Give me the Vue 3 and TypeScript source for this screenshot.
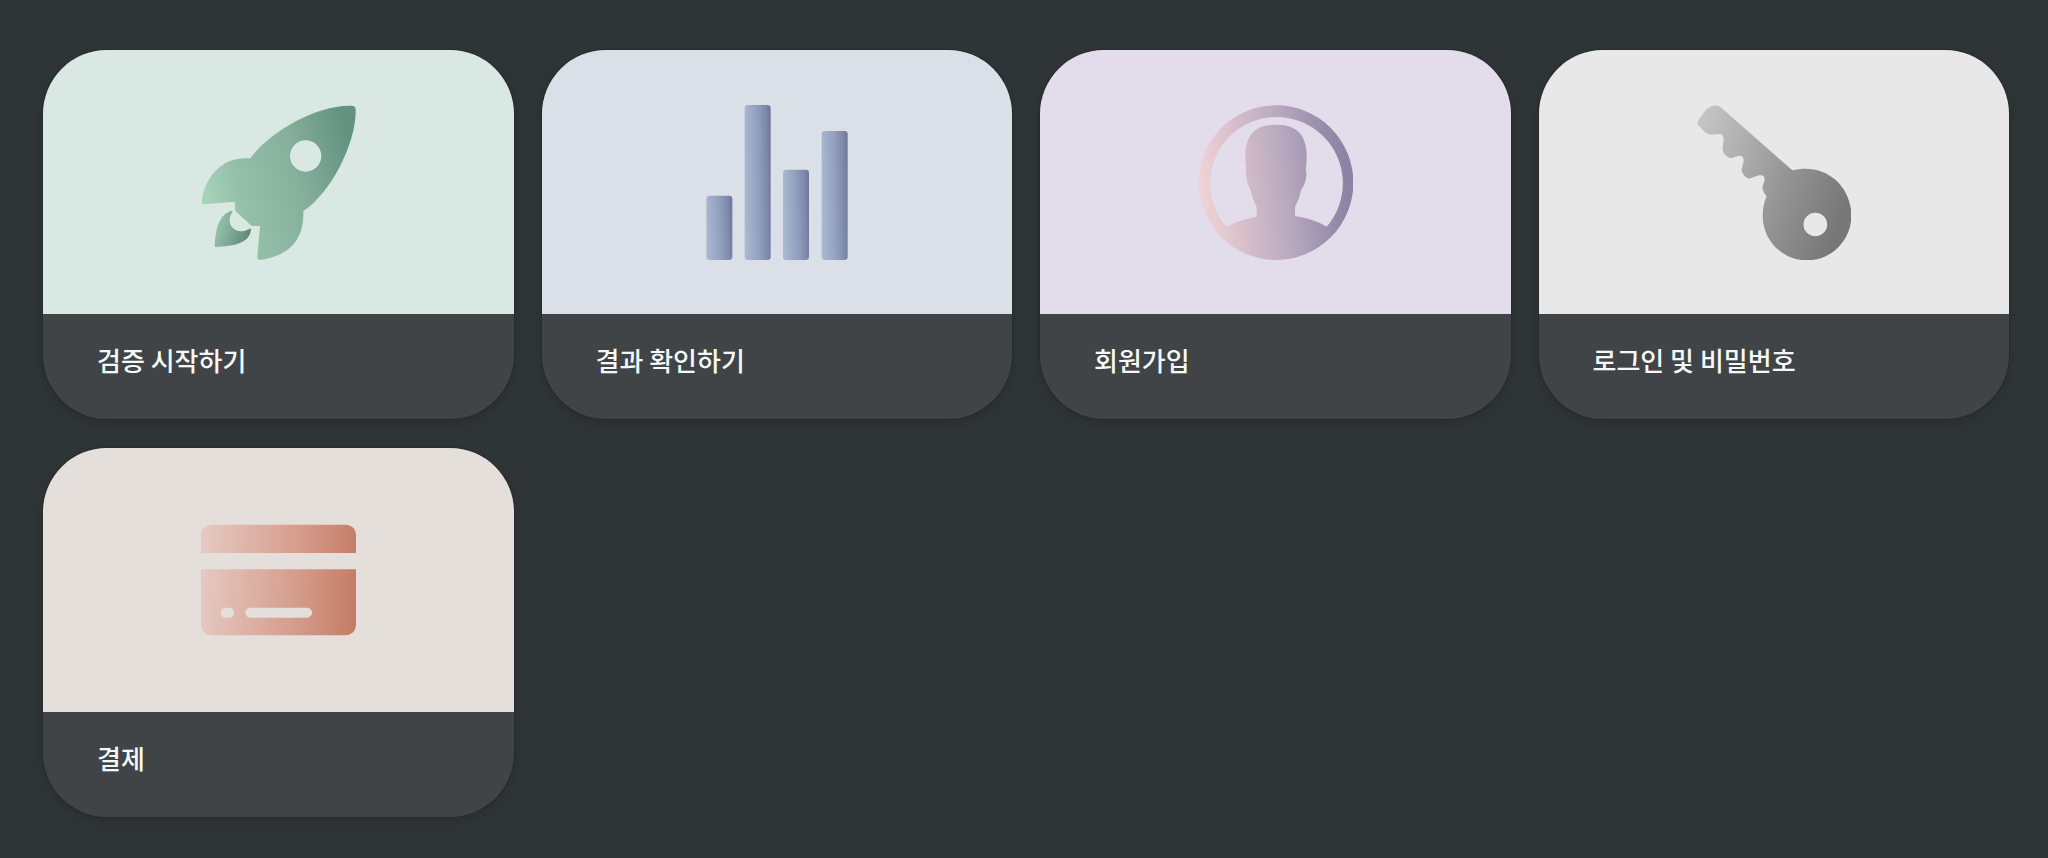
<script setup lang="ts">
type IconName = 'rocket' | 'bars' | 'person' | 'key' | 'card'

interface Topic {
  id: IconName
  title: string
}

const topics: Topic[] = [
  { id: 'rocket', title: '검증 시작하기' },
  { id: 'bars', title: '결과 확인하기' },
  { id: 'person', title: '회원가입' },
  { id: 'key', title: '로그인 및 비밀번호' },
  { id: 'card', title: '결제' },
]
</script>

<template>
  <main class="page">
    <ul class="grid">
      <li v-for="topic in topics" :key="topic.id" class="cell">
        <a class="tile" :href="`#${topic.id}`">
          <span class="cover" :class="topic.id">
            <svg v-if="topic.id === 'rocket'" class="icon" viewBox="62 73 465 465" aria-hidden="true">
              <defs>
                <linearGradient id="rocket-body" x1="0" y1="0.62" x2="1" y2="0.36">
                  <stop offset="0" stop-color="#a8d5bb" />
                  <stop offset="0.25" stop-color="#94c0aa" />
                  <stop offset="0.62" stop-color="#86b09c" />
                  <stop offset="1" stop-color="#629280" />
                </linearGradient>
                <linearGradient id="rocket-flame" x1="0" y1="0.3" x2="1" y2="0.6">
                  <stop offset="0" stop-color="#9ac8b0" />
                  <stop offset="1" stop-color="#618777" />
                </linearGradient>
              </defs>
              <path
                fill="url(#rocket-body)"
                fill-rule="evenodd"
                d="M210 233C256 165 398 72 514 75Q524 75 526 84C530 180 455 335 369 391C372 480 325 524 240 538Q230 538 231 528L239 436L214 436L165 391L163 363L71 371Q62 371 64 360C77 280 131 226 210 233ZM376 179A47 47 0 1 0 376 273A47 47 0 1 0 376 179Z"
              />
              <path
                fill="url(#rocket-flame)"
                d="M154 390Q158 391 156 395C137 421 154 451 181 452Q193 452 208 444Q212 443 212 448C207 486 163 497 106 499Q102 499 103 494C106 441 118 399 154 390Z"
              />
            </svg>

            <svg v-else-if="topic.id === 'bars'" class="icon" viewBox="58 73 465 465" aria-hidden="true">
              <defs>
                <linearGradient id="bar-fill" x1="0" y1="0.55" x2="1" y2="0.45">
                  <stop offset="0" stop-color="#a9b9d1" />
                  <stop offset="0.5" stop-color="#93a1bf" />
                  <stop offset="0.85" stop-color="#7e89ab" />
                  <stop offset="1" stop-color="#73789a" />
                </linearGradient>
              </defs>
              <g fill="url(#bar-fill)">
                <rect x="80" y="345" width="78" height="193" rx="10" />
                <rect x="195" y="73" width="78" height="465" rx="10" />
                <rect x="310" y="267" width="78" height="271" rx="10" />
                <rect x="426" y="151" width="78" height="387" rx="10" />
              </g>
            </svg>

            <svg v-else-if="topic.id === 'person'" class="icon" viewBox="53 73 465 465" aria-hidden="true">
              <defs>
                <linearGradient id="person-fill" x1="0" y1="0.55" x2="1" y2="0.45">
                  <stop offset="0" stop-color="#f0d4d5" />
                  <stop offset="0.25" stop-color="#d9c0cb" />
                  <stop offset="0.55" stop-color="#b9aabf" />
                  <stop offset="0.85" stop-color="#958ba9" />
                  <stop offset="1" stop-color="#8a81a4" />
                </linearGradient>
              </defs>
              <path
                fill="url(#person-fill)"
                fill-rule="evenodd"
                d="M287 74A232 232 0 1 0 287 538A232 232 0 1 0 287 74ZM138 438A199 199 0 1 1 439 438Q402 415 344 406L344 380Q358 352 363 326Q376 310 378 286Q379 273 376 268C387 190 372 132 287 132C202 132 187 190 198 268Q195 273 198 286Q200 310 210 326Q216 354 229 380L229 408Q180 416 138 438Z"
              />
            </svg>

            <svg v-else-if="topic.id === 'key'" class="icon" viewBox="49 73 465 465" aria-hidden="true">
              <defs>
                <linearGradient id="key-fill" x1="0" y1="0.2" x2="1" y2="0.55">
                  <stop offset="0" stop-color="#c4c4c4" />
                  <stop offset="0.3" stop-color="#adadad" />
                  <stop offset="0.6" stop-color="#949494" />
                  <stop offset="1" stop-color="#777777" />
                </linearGradient>
              </defs>
              <path
                fill="url(#key-fill)"
                fill-rule="evenodd"
                d="M91 79Q110 69 126 82L338 269C437 245 515 315 515 405C515 480 454 539 382 539C309 539 249 480 249 405Q249 373 261 347Q246 329 249 316L255 299Q256 281 238 284L214 292Q203 296 195 286Q184 275 186 265L192 241Q192 223 176 226L154 232Q143 231 134 219Q127 210 129 200L132 175Q131 158 117 160L92 162Q83 160 76 155L55 133Q51 128 55 122L76 90Q82 82 91 79ZM407 396A35 35 0 1 0 407 467A35 35 0 1 0 407 396Z"
              />
            </svg>

            <svg v-else class="icon" viewBox="62 8 465 465" aria-hidden="true">
              <defs>
                <linearGradient id="card-fill" gradientUnits="userSpaceOnUse" x1="62" y1="230" x2="527" y2="260">
                  <stop offset="0" stop-color="#e5c9c1" />
                  <stop offset="0.3" stop-color="#deb3a7" />
                  <stop offset="0.65" stop-color="#d49a89" />
                  <stop offset="1" stop-color="#c57c65" />
                </linearGradient>
              </defs>
              <path
                fill="url(#card-fill)"
                fill-rule="evenodd"
                d="M62 158L62 103Q64 76 93 73L497 73Q525 76 527 103L527 158ZM62 207L527 207L527 375Q525 403 497 405L93 405Q64 403 62 375ZM135 322Q121 324 121 337Q121 350 135 352L149 352Q161 350 161 337Q161 324 149 322ZM210 322A15 15 0 0 0 210 352L380 352A15 15 0 0 0 380 322Z"
              />
            </svg>
          </span>
          <span class="title">{{ topic.title }}</span>
        </a>
      </li>
    </ul>
  </main>
</template>

<style>
body {
  margin: 0;
  background: #2f3437;
}
</style>

<style scoped>
.page {
  padding: 50px 39px 40px 43px;
  font-family: "Noto Sans CJK KR", sans-serif;
}

.grid {
  display: grid;
  grid-template-columns: repeat(4, minmax(0, 1fr));
  gap: 29px 28px;
  margin: 0;
  padding: 0;
  list-style: none;
}

.cell {
  min-width: 0;
}

.tile {
  display: flex;
  flex-direction: column;
  overflow: hidden;
  border-radius: 64px;
  background: #404447;
  box-shadow: 0 0 0 1px rgba(15, 15, 15, 0.14), 0 4px 8px rgba(15, 15, 15, 0.18);
  color: #f5f8f9;
  text-decoration: none;
}

.cover {
  display: flex;
  align-items: center;
  justify-content: center;
  aspect-ratio: 57 / 32;
}

.cover.rocket {
  background: #dae8e3;
}

.cover.bars {
  background: #dbe0e8;
}

.cover.person {
  background: #e3dcea;
}

.cover.key {
  background: #e8e8e8;
}

.cover.card {
  background: #e4dfdb;
}

.icon {
  display: block;
  width: 155px;
  height: 155px;
}

.title {
  padding: 28px 54px 41px;
  font-size: 26px;
  font-weight: 500;
  line-height: 36px;
}
</style>
